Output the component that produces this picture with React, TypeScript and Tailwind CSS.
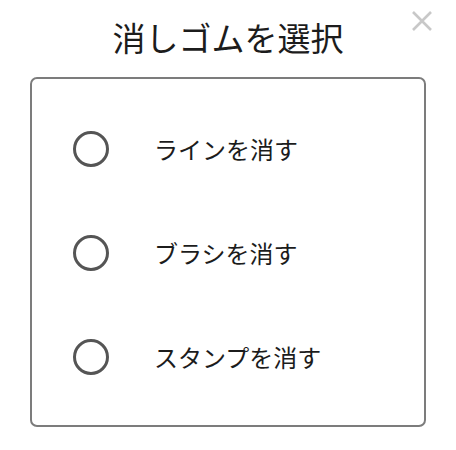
import React from 'react';

const OPTIONS = ['ラインを消す', 'ブラシを消す', 'スタンプを消す'];

const CloseIcon: React.FC = () => (
  <svg width="22" height="22" viewBox="0 0 22 22" className="block">
    <path d="M2 2 L20 20 M20 2 L2 20" stroke="#c8c8c8" strokeWidth="2.6" strokeLinecap="butt" />
  </svg>
);

export default function App() {
  return (
    <div
      className="relative w-[456px] h-[450px] bg-white text-[#1c1c1c]"
      style={{ fontFamily: '"Noto Sans CJK JP", "Noto Sans", sans-serif' }}
    >
      <button className="absolute top-[10px] right-[23px] p-0 bg-transparent border-0">
        <CloseIcon />
      </button>
      <h1 className="pt-[16px] h-[77px] text-center text-[33px] leading-[42px] font-normal">
        消しゴムを選択
      </h1>
      <div className="mx-[30px] h-[350px] border-2 border-[#7c7c7c] rounded-[7px] py-[18px]">
        {OPTIONS.map((label) => (
          <label key={label} className="flex items-center h-[104px] pl-[41px] cursor-pointer">
            <span className="w-[36px] h-[36px] rounded-full border-[3px] border-[#555555] shrink-0" />
            <span className="ml-[45px] text-[24px] leading-[32px]">{label}</span>
          </label>
        ))}
      </div>
    </div>
  );
}
